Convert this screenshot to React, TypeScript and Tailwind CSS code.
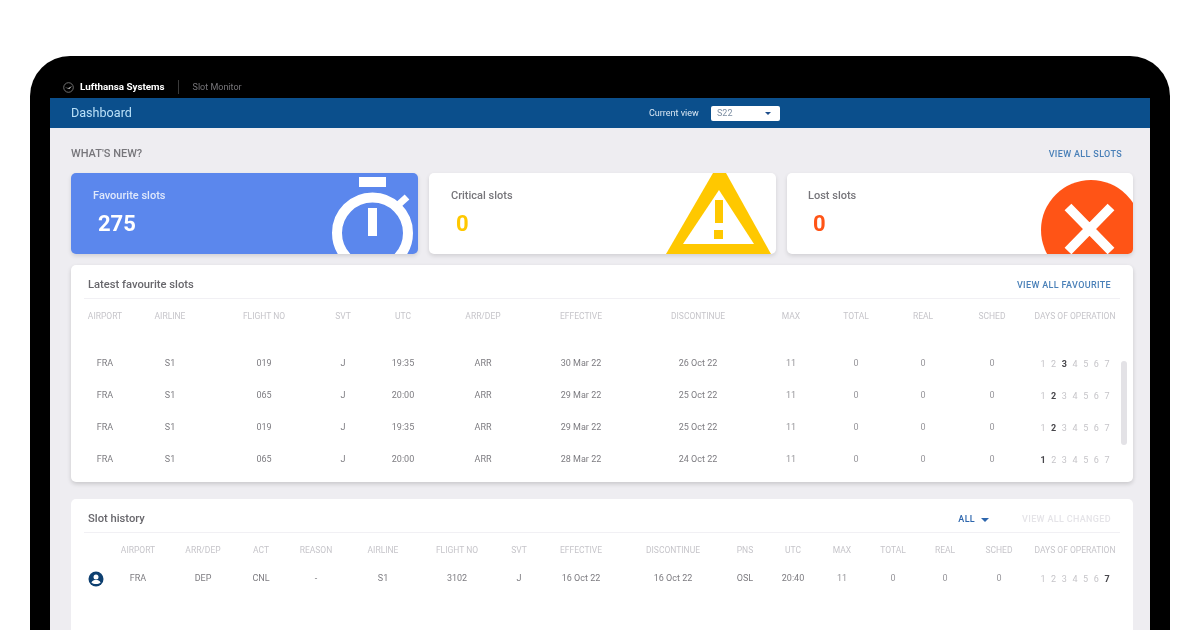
const favCols = ["w-[42px]","w-[88px]","w-[100px]","w-[58px]","w-[62px]","w-[98px]","w-[98px]","w-[136px]","w-[50px]","w-[80px]","w-[54px]","w-[84px]","w-[82px]"];
const favHead = ["AIRPORT","AIRLINE","FLIGHT NO","SVT","UTC","ARR/DEP","EFFECTIVE","DISCONTINUE","MAX","TOTAL","REAL","SCHED","DAYS OF OPERATION"];
const favRows: [string[], number][] = [
  [["FRA","S1","019","J","19:35","ARR","30 Mar 22","26 Oct 22","11","0","0","0"],3],
  [["FRA","S1","065","J","20:00","ARR","29 Mar 22","25 Oct 22","11","0","0","0"],2],
  [["FRA","S1","019","J","19:35","ARR","29 Mar 22","25 Oct 22","11","0","0","0"],2],
  [["FRA","S1","065","J","20:00","ARR","28 Mar 22","24 Oct 22","11","0","0","0"],1],
];
const histCols = ["w-[24px]","w-[60px]","w-[70px]","w-[46px]","w-[64px]","w-[70px]","w-[78px]","w-[46px]","w-[78px]","w-[106px]","w-[38px]","w-[58px]","w-[40px]","w-[62px]","w-[42px]","w-[66px]","w-[86px]"];
const histHead = ["","AIRPORT","ARR/DEP","ACT","REASON","AIRLINE","FLIGHT NO","SVT","EFFECTIVE","DISCONTINUE","PNS","UTC","MAX","TOTAL","REAL","SCHED","DAYS OF OPERATION"];
const histRow = ["FRA","DEP","CNL","-","S1","3102","J","16 Oct 22","16 Oct 22","OSL","20:40","11","0","0","0"];

function Days({ on }: { on: number }) {
  return (
    <div className="flex justify-center gap-[5.6px] text-[9px] leading-none text-[#c6c5c9]">
      {[1,2,3,4,5,6,7].map((d) => (
        <span key={d} className={d === on ? "font-bold text-[#47464b]" : ""}>{d}</span>
      ))}
    </div>
  );
}

function HeadRow({ cols, labels }: { cols: string[]; labels: string[] }) {
  return (
    <div className="flex h-[12px] items-center text-[8.5px] text-[#c6c5ca]">
      {labels.map((l, i) => (
        <div key={i} className={`${cols[i]} flex shrink-0 justify-center whitespace-nowrap`}>{l}</div>
      ))}
    </div>
  );
}

function StatCard({ title, value, className, titleClass, valueClass, children }: { title: string; value: string; className: string; titleClass: string; valueClass: string; children: React.ReactNode }) {
  return (
    <div className={`relative h-[81px] shrink-0 overflow-hidden rounded-[5px] pt-[16px] shadow-[0_2px_4px_rgba(0,0,0,0.12)] ${className}`}>
      <div className={`text-[11px] font-medium leading-[14px] ${titleClass}`}>{title}</div>
      <div className={`mt-[7px] pl-[5px] text-[22px] font-bold leading-[28px] ${valueClass}`}>{value}</div>
      {children}
    </div>
  );
}

export default function App() {
  return (
    <div className="h-[630px] w-[1200px] overflow-hidden bg-white pl-[30px] pr-[30px] pt-[56px] font-['Roboto',sans-serif]">
      <div className="h-[574px] rounded-t-[40px] bg-black px-[20px] blur-[0.35px]">
        <div className="flex h-[42px] items-center pl-[13px] pt-[20px]">
          <svg width="11" height="11" viewBox="0 0 11 11" className="mr-[6px]" fill="none">
            <circle cx="5.5" cy="5.5" r="4.8" stroke="#8a8a8a" strokeWidth="0.8" />
            <path d="M1.8 5.6 L5.4 6 L9 4 L6.4 6.9 Z" fill="#c8c8c8" />
          </svg>
          <span className="text-[9.8px] font-bold leading-none text-white">Lufthansa Systems</span>
          <div className="ml-[13px] h-[14px] w-px bg-[#3a3a3a]" />
          <span className="ml-[14px] text-[9px] leading-none text-[#77767a]">Slot Monitor</span>
        </div>

        <div className="flex h-[30px] items-center bg-[#0b4f8c] pl-[21px]">
          <div className="w-[578px] text-[12.6px] leading-none text-[#b9e0f8]">Dashboard</div>
          <div className="w-[62px] text-[9px] leading-none text-[#dbe8f4]">Current view</div>
          <div className="flex h-[15px] w-[69px] items-center justify-between rounded-[2px] bg-white pl-[6px] pr-[9px]">
            <span className="text-[9px] leading-none text-[#7d8fa3]">S22</span>
            <span className="h-0 w-0 border-x-[3px] border-t-[3px] border-x-transparent border-t-[#1f4f8c]" />
          </div>
        </div>

        <div className="h-[502px] overflow-hidden bg-[#eeedf1] pl-[21px] pr-[17px]">
          <div className="flex h-[45px] items-end justify-between pb-[13px] pr-[11px]">
            <span className="text-[11px] font-medium leading-[12px] text-[#77767b]">WHAT'S NEW?</span>
            <span className="text-[9px] font-medium leading-[12px] tracking-[0.35px] text-[#4a80b8]">VIEW ALL SLOTS</span>
          </div>

          <div className="flex gap-[11px]">
            <StatCard title="Favourite slots" value="275" className="w-[347px] bg-[#5b87ed] pl-[22px]" titleClass="text-[#dfe8fb]" valueClass="text-white">
              <svg className="absolute left-0 top-0" width="347" height="81" viewBox="0 0 347 81" fill="none">
                <rect x="288" y="4" width="27" height="10" fill="#fff" />
                <circle cx="301.5" cy="60" r="35.5" stroke="#fff" strokeWidth="10" />
                <rect x="297" y="35" width="9" height="28" fill="#fff" />
                <path d="M326 33 L336 24" stroke="#fff" strokeWidth="7" />
              </svg>
            </StatCard>
            <StatCard title="Critical slots" value="0" className="w-[347px] bg-white pl-[22px]" titleClass="text-[#77767b]" valueClass="text-[#ffc800]">
              <svg className="absolute left-0 top-0" width="347" height="81" viewBox="0 0 347 81" fill="none">
                <path d="M284 0 H297 L342 81 H237 Z" fill="#ffc800" />
                <path d="M290 17 L325 71 H254 Z" fill="#fff" />
                <rect x="286" y="27" width="8" height="23" fill="#ffc800" />
                <rect x="285" y="57" width="9" height="9" fill="#ffc800" />
              </svg>
            </StatCard>
            <StatCard title="Lost slots" value="0" className="w-[346px] bg-white pl-[21px]" titleClass="text-[#77767b]" valueClass="text-[#ff5416]">
              <svg className="absolute left-0 top-0" width="346" height="81" viewBox="0 0 346 81" fill="none">
                <circle cx="304" cy="57" r="50" fill="#ff5416" />
                <path d="M281 34 L324 78 M324 34 L281 78" stroke="#fff" strokeWidth="9.5" />
              </svg>
            </StatCard>
          </div>

          <div className="relative mt-[11px] h-[217px] rounded-[5px] bg-white px-[13px] shadow-[0_2px_4px_rgba(0,0,0,0.16)]">
            <div className="flex h-[34px] items-center justify-between border-b border-[#f1f0f4] pl-[4px] pr-[9px] pt-[8px]">
              <span className="text-[11.2px] font-medium text-[#68676c]">Latest favourite slots</span>
              <span className="text-[9px] font-medium tracking-[0.35px] text-[#4a80b8]">VIEW ALL FAVOURITE</span>
            </div>
            <div className="pt-[11px]">
              <HeadRow cols={favCols} labels={favHead} />
            </div>
            <div className="pt-[26px]">
              {favRows.map(([cells, on], r) => (
                <div key={r} className="flex h-[32px] items-center text-[9px] text-[#7d7c81]">
                  {cells.map((c, i) => (
                    <div key={i} className={`${favCols[i]} flex shrink-0 justify-center whitespace-nowrap ${i > 7 ? "text-[#97969b]" : ""}`}>{c}</div>
                  ))}
                  <div className={`${favCols[12]} shrink-0`}><Days on={on} /></div>
                </div>
              ))}
            </div>
            <div className="absolute left-[1050px] top-[96px] h-[84px] w-[6px] rounded-[3px] bg-[#e3e2e6]" />
          </div>

          <div className="mt-[17px] h-[160px] rounded-t-[5px] bg-white px-[13px]">
            <div className="flex h-[34px] items-center border-b border-[#f1f0f4] pl-[4px] pr-[9px] pt-[8px]">
              <span className="text-[11.2px] font-medium text-[#68676c]">Slot history</span>
              <span className="ml-auto text-[9px] font-medium tracking-[0.35px] text-[#2d66ad]">ALL</span>
              <span className="ml-[6px] h-0 w-0 border-x-[4px] border-t-[4px] border-x-transparent border-t-[#2d66ad]" />
              <span className="ml-[33px] text-[9px] font-medium tracking-[0.35px] text-[#e5e4e8]">VIEW ALL CHANGED</span>
            </div>
            <div className="pt-[11px]">
              <HeadRow cols={histCols} labels={histHead} />
            </div>
            <div className="mt-[7px] flex h-[32px] items-center text-[9px] text-[#7d7c81]">
              <div className={`${histCols[0]} flex shrink-0 justify-center`}>
                <svg width="16" height="16" viewBox="0 0 16 16">
                  <circle cx="8" cy="8" r="7.5" fill="#0d3f70" />
                  <circle cx="8" cy="5.9" r="2.5" fill="#fff" />
                  <path d="M3.4 11.4 C4.4 9.6 6 9 8 9 C10 9 11.6 9.6 12.6 11.4 C11.4 12.5 9.8 13 8 13 C6.2 13 4.6 12.5 3.4 11.4 Z" fill="#fff" />
                </svg>
              </div>
              {histRow.map((c, i) => (
                <div key={i} className={`${histCols[i + 1]} flex shrink-0 justify-center whitespace-nowrap ${i > 10 ? "text-[#97969b]" : ""}`}>{c}</div>
              ))}
              <div className={`${histCols[16]} shrink-0`}><Days on={7} /></div>
            </div>
          </div>
        </div>
      </div>
    </div>
  );
}
